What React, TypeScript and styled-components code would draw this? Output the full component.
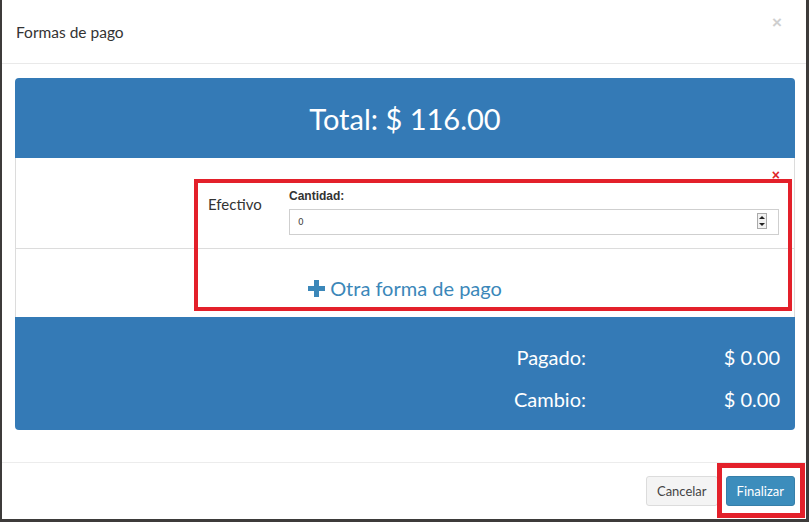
import React from 'react'
import styled, { createGlobalStyle } from 'styled-components'

const GlobalStyle = createGlobalStyle`
  html, body {
    margin: 0;
    padding: 0;
    background: #3d3b3a;
  }
  body {
    font-family: Lato, "Open Sans", sans-serif;
  }
`

const Backdrop = styled.div`
  width: 809px;
  height: 522px;
  overflow: hidden;
  background: #3d3b3a;
  padding-left: 2px;
  box-sizing: border-box;
`

const Modal = styled.div`
  position: relative;
  width: 804px;
  height: 519px;
  background: #fff;
  display: flex;
  flex-direction: column;
`

const Header = styled.div`
  height: 63px;
  border-bottom: 1px solid #e9e9e9;
  display: flex;
  justify-content: space-between;
  align-items: center;
  padding: 0 24px 0 14px;
`

const Title = styled.h4`
  margin: 0;
  font-size: 15.5px;
  font-weight: 400;
  color: #333;
`

const Close = styled.span`
  align-self: flex-start;
  margin-top: 13px;
  font-family: "Liberation Sans", sans-serif;
  font-size: 17px;
  font-weight: 700;
  color: #cfcfcf;
`

const Body = styled.div`
  padding: 14px 11px 31px 13px;
`

const Panel = styled.div`
  display: flex;
  flex-direction: column;
`

const PanelHead = styled.div`
  height: 80px;
  background: #347ab6;
  border-radius: 4px 4px 0 0;
  color: #fff;
  font-size: 29px;
  display: flex;
  align-items: center;
  justify-content: center;
`

const Rows = styled.div`
  border-left: 1px solid #dcdcdc;
  border-right: 1px solid #dcdcdc;
`

const PayRow = styled.div`
  position: relative;
  height: 91px;
  border-bottom: 1px solid #dcdcdc;
  display: grid;
  grid-template-columns: 192px 81px 1fr;
  padding: 30px 15px 0 0;
  box-sizing: border-box;
`

const Method = styled.div`
  grid-column: 2;
  margin-top: 6px;
  font-size: 15px;
  line-height: 20px;
  color: #333;
`

const Field = styled.div`
  display: flex;
  flex-direction: column;
`

const Label = styled.label`
  font-family: "Liberation Sans", Arial, sans-serif;
  font-size: 12px;
  font-weight: 700;
  line-height: 16px;
  color: #333;
`

const InputWrap = styled.div`
  position: relative;
  margin-top: 5px;
`

const Input = styled.input`
  width: 100%;
  height: 26px;
  box-sizing: border-box;
  border: 1px solid #cfcfcf;
  padding: 0 8px;
  font-family: Tahoma, "DejaVu Sans", sans-serif;
  font-size: 9px;
  color: #444;
  outline: none;
`

const Spinner = styled.div`
  position: absolute;
  right: 12px;
  top: 4px;
  width: 10px;
  height: 16px;
  display: flex;
  flex-direction: column;
  border: 1px solid #aaa;
  box-sizing: border-box;
  background: #f2f2f2;
`

const Remove = styled.span`
  position: absolute;
  right: 14px;
  top: 10px;
  font-family: "Liberation Sans", sans-serif;
  font-size: 14px;
  font-weight: 700;
  line-height: 14px;
  color: #e0262b;
`

const AddRow = styled.div`
  height: 68px;
  display: flex;
  justify-content: center;
  align-items: flex-start;
  padding-top: 28px;
  box-sizing: border-box;
`

const AddLink = styled.a`
  display: flex;
  align-items: center;
  gap: 5px;
  font-size: 20px;
  line-height: 22px;
  color: #3b87b9;
  text-decoration: none;
  cursor: pointer;
`

const Totals = styled.div`
  height: 113px;
  background: #347ab6;
  border-radius: 0 0 4px 4px;
  display: grid;
  grid-template-columns: 1fr 194px;
  grid-auto-rows: 26px;
  row-gap: 16px;
  padding: 27px 15px 0 0;
  box-sizing: border-box;
  color: #fff;
  font-size: 20px;
  line-height: 26px;
`

const TotalCell = styled.div`
  text-align: right;
`

const Footer = styled.div`
  margin-top: auto;
  height: 56px;
  border-top: 1px solid #ececec;
  display: flex;
  justify-content: flex-end;
  align-items: center;
  gap: 8px;
  padding-right: 11px;
`

const Button = styled.button<{ $primary?: boolean }>`
  height: 30px;
  padding: 0 10px;
  border-radius: 3px;
  font-family: Lato, "Open Sans", sans-serif;
  font-size: 13px;
  cursor: pointer;
  border: 1px solid ${p => (p.$primary ? '#367fa9' : '#dcdcdc')};
  background: ${p => (p.$primary ? '#3c8dbc' : '#f4f4f4')};
  color: ${p => (p.$primary ? '#fff' : '#444')};
`

const Highlight = styled.div<{ $w: number }>`
  position: absolute;
  border: ${p => p.$w}px solid #e3202a;
  box-sizing: border-box;
  pointer-events: none;
`

const Arrow = ({ up }: { up?: boolean }) => (
  <svg width="8" height="7" viewBox="0 0 8 7" style={{ margin: '0 auto' }}>
    <path d={up ? 'M1 5 L4 2 L7 5 Z' : 'M1 2 L4 5 L7 2 Z'} fill="#222" />
  </svg>
)

const PlusIcon = () => (
  <svg width="17" height="17" viewBox="0 0 17 17">
    <path d="M6 0h5v6h6v5h-6v6H6v-6H0V6h6z" fill="#3b87b9" />
  </svg>
)

const App = () => {
  return (
    <>
      <GlobalStyle />
      <Backdrop>
        <Modal>
          <Header>
            <Title>Formas de pago</Title>
            <Close>×</Close>
          </Header>
          <Body>
            <Panel>
              <PanelHead>Total: $ 116.00</PanelHead>
              <Rows>
                <PayRow>
                  <Method>Efectivo</Method>
                  <Field>
                    <Label>Cantidad:</Label>
                    <InputWrap>
                      <Input type="text" defaultValue="0" />
                      <Spinner>
                        <Arrow up />
                        <Arrow />
                      </Spinner>
                    </InputWrap>
                  </Field>
                  <Remove>×</Remove>
                </PayRow>
                <AddRow>
                  <AddLink>
                    <PlusIcon />
                    Otra forma de pago
                  </AddLink>
                </AddRow>
              </Rows>
              <Totals>
                <TotalCell>Pagado:</TotalCell>
                <TotalCell>$ 0.00</TotalCell>
                <TotalCell>Cambio:</TotalCell>
                <TotalCell>$ 0.00</TotalCell>
              </Totals>
            </Panel>
          </Body>
          <Footer>
            <Button>Cancelar</Button>
            <Button $primary>Finalizar</Button>
          </Footer>
          <Highlight $w={4} style={{ left: 192, top: 179, width: 598, height: 132 }} />
          <Highlight $w={5} style={{ left: 715, top: 463, width: 88, height: 55 }} />
        </Modal>
      </Backdrop>
    </>
  )
}

export default App
